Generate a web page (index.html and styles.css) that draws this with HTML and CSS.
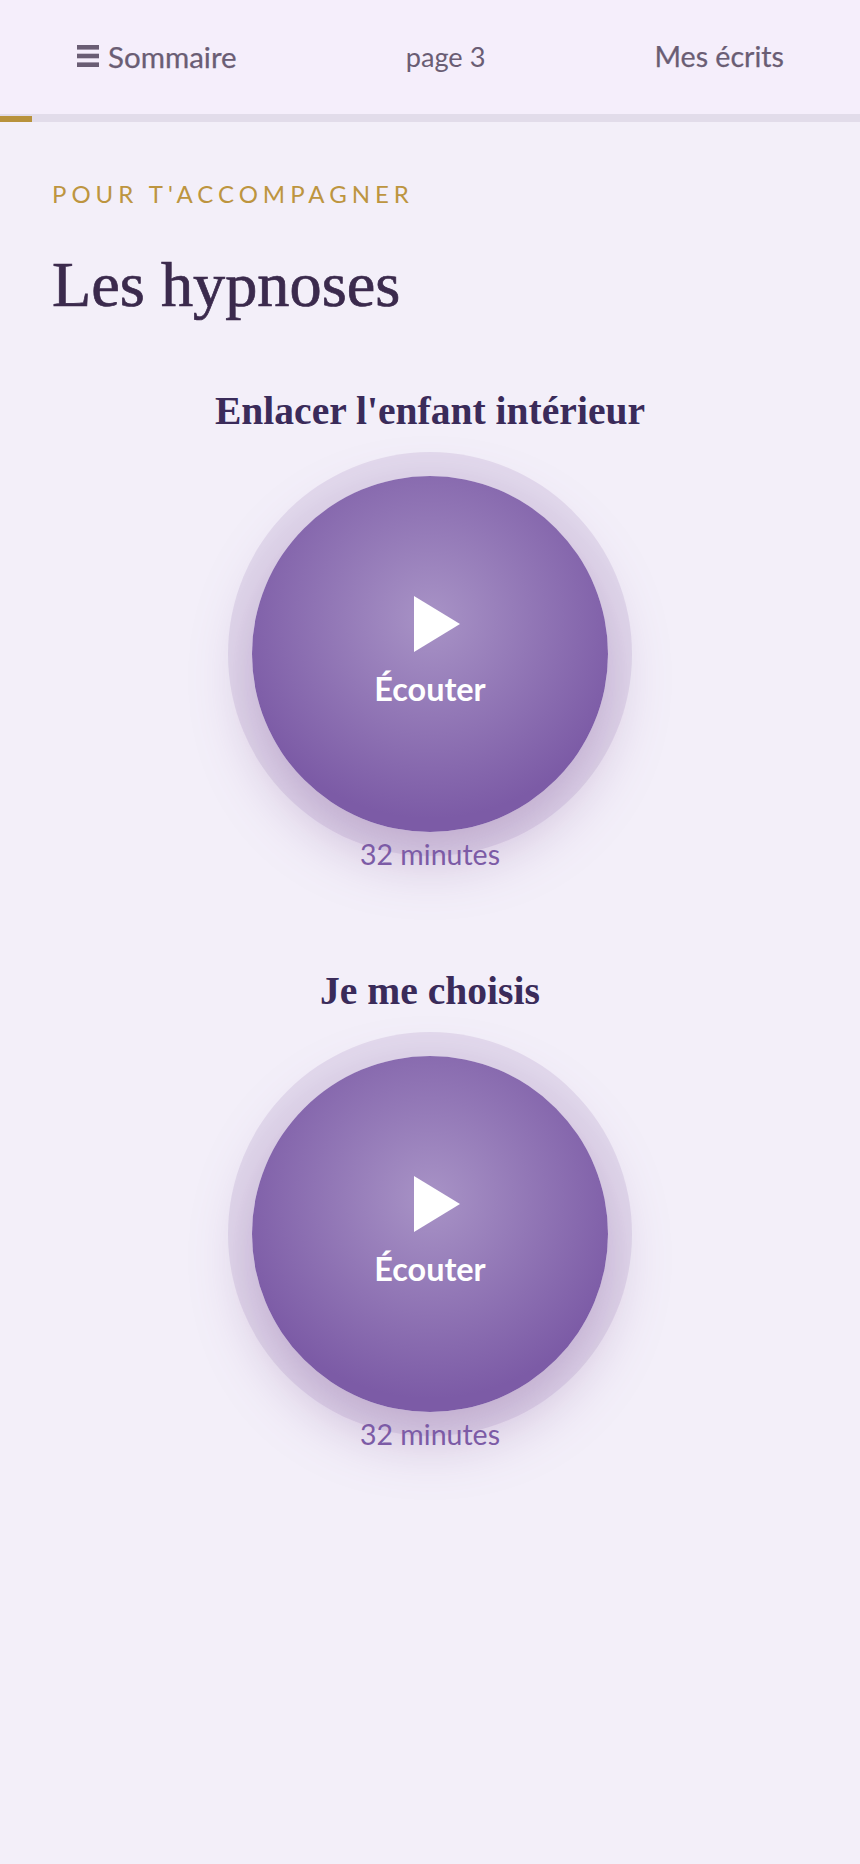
FILE: index.html
```html
<!DOCTYPE html>
<html lang="fr">
<head>
<meta charset="utf-8">
<title>Les hypnoses</title>
<link rel="stylesheet" href="styles.css">
</head>
<body>
<header class="topbar">
  <a class="nav-link menu"><svg class="burger" viewBox="0 0 22 22" aria-hidden="true"><rect x="0" y="0" width="22" height="4.6"/><rect x="0" y="8.7" width="22" height="4.6"/><rect x="0" y="17.4" width="22" height="4.6"/></svg>Sommaire</a>
  <span class="nav-link page">page 3</span>
  <a class="nav-link writings">Mes écrits</a>
</header>
<div class="progress"><div class="progress-fill"></div></div>
<main class="content">
  <p class="eyebrow">POUR T'ACCOMPAGNER</p>
  <h1 class="title">Les hypnoses</h1>
  <section class="track">
    <h2 class="track-title">Enlacer l'enfant intérieur</h2>
    <button class="player"><span class="play"></span><span class="listen">Écouter</span></button>
    <p class="duration">32 minutes</p>
  </section>
  <section class="track">
    <h2 class="track-title">Je me choisis</h2>
    <button class="player"><span class="play"></span><span class="listen">Écouter</span></button>
    <p class="duration">32 minutes</p>
  </section>
</main>
</body>
</html>
```
FILE: styles.css
```css
* { box-sizing: border-box; }
html, body { margin: 0; padding: 0; }
body {
  width: 860px;
  min-height: 1864px;
  background: #f3eff9;
  font-family: "Lato", "Noto Sans", sans-serif;
  overflow-x: hidden;
}
.topbar {
  height: 114px;
  padding: 0 76px 2px 77px;
  background: #f5eefb;
  display: flex;
  align-items: center;
  justify-content: space-between;
}
.nav-link {
  display: flex;
  align-items: center;
  gap: 9px;
  font-size: 28.6px;
  color: #6a5d74;
  -webkit-text-stroke: 0.25px #6a5d74;
}
.menu { font-size: 29.5px; }
.page { font-size: 27.2px; -webkit-text-stroke: 0; }
.burger { width: 22px; height: 22px; fill: #6a5d74; }
.progress { height: 8px; background: #e2dcea; display: flex; align-items: flex-end; }
.progress-fill { width: 32px; height: 6px; background: #b8923c; }
.content { padding: 0 52px; }
.eyebrow {
  margin: 57px 0 0;
  font-size: 24px;
  line-height: 30px;
  letter-spacing: 5px;
  color: #bd9540;
}
.title {
  margin: 36px 0 0;
  font-family: "Liberation Serif", serif;
  font-weight: 400;
  font-size: 64.3px;
  line-height: 80px;
  color: #3b2a4d;
  -webkit-text-stroke: 0.7px #3b2a4d;
}
.track { display: flex; flex-direction: column; align-items: center; margin-bottom: 95px; }
.track:first-of-type { margin-top: 61px; }
.track-title {
  margin: 0 0 40px;
  font-family: "Liberation Serif", serif;
  font-weight: 700;
  font-size: 39.6px;
  line-height: 50px;
  color: #3a2b5a;
}
.player {
  width: 356px;
  height: 356px;
  padding: 0 0 2px;
  border: 0;
  border-radius: 50%;
  background: radial-gradient(circle at 50% 40%, #a893c6, #7c5ba6 72%);
  box-shadow: 0 0 0 24px rgba(124, 91, 166, 0.14), 0 24px 60px rgba(130, 85, 150, 0.38);
  display: flex;
  flex-direction: column;
  align-items: center;
  justify-content: center;
  font-family: inherit;
}
.play {
  width: 0;
  height: 0;
  margin-left: 14px;
  border-left: 46px solid #fff;
  border-top: 28px solid transparent;
  border-bottom: 28px solid transparent;
}
.listen {
  margin-top: 16px;
  font-size: 32.4px;
  line-height: 42px;
  font-weight: 700;
  color: #fff;
}
.duration {
  position: relative;
  margin: 5px 0 0;
  font-size: 28.5px;
  line-height: 34px;
  color: #7c5ba6;
}
```
